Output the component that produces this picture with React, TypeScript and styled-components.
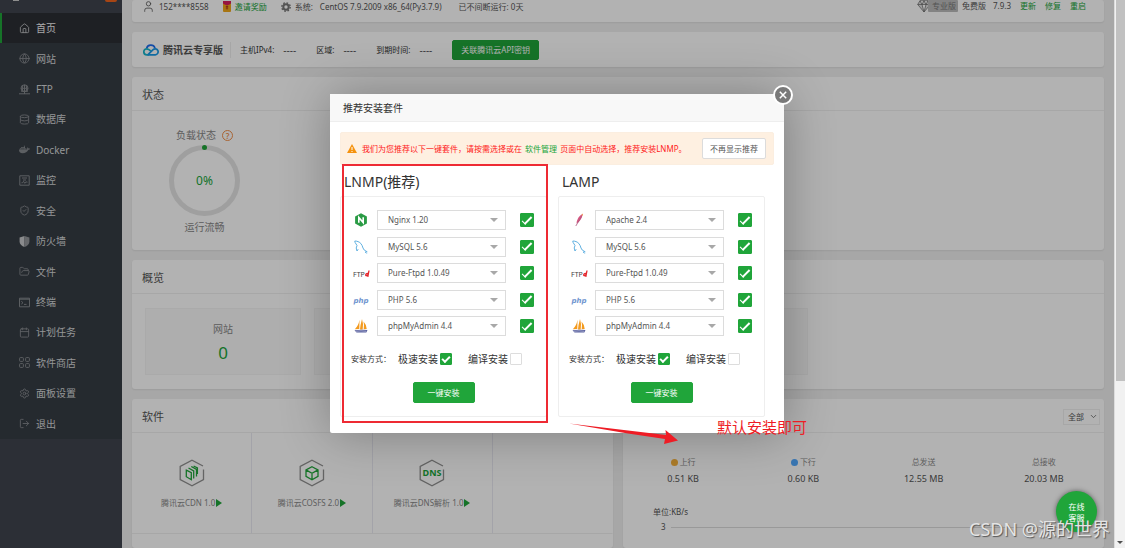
import React from 'react';
import styled, { createGlobalStyle } from 'styled-components';
import {
  House, Globe, Database, ShieldCheck, FolderOpen, Calendar, Settings, LogOut, User, ChevronDown,
} from 'lucide-react';
import { FaDocker } from 'react-icons/fa';

const GlobalStyle = createGlobalStyle`
  *, *::before, *::after { box-sizing: border-box; }
  body {
    margin: 0;
    overflow: hidden;
    background: #f0f0f0;
    color: #555;
    font-family: "Noto Sans", "Noto Sans CJK SC", sans-serif;
    font-size: 8px;
    line-height: 12px;
  }
  button, select, input { font: inherit; color: inherit; margin: 0; }
  a { color: inherit; text-decoration: none; }
  h1, h2, h3, p, ul { margin: 0; padding: 0; font-weight: 400; }
  ul { list-style: none; }
  svg { display: block; flex: none; }
`;

const GREEN = '#20a53a';

const Shell = styled.div`
  position: relative;
  display: grid;
  grid-template-columns: 122px minmax(0, 1fr) 11px;
  height: 100vh;
  overflow: hidden;
`;

/* ---------- sidebar ---------- */

const Sidebar = styled.aside`
  background: #3f444e;
`;

const Brand = styled.div`
  display: flex;
  justify-content: space-between;
  height: 13px;
  padding: 0 5px 0 13px;
`;

const BrandMark = styled.span`
  width: 6px;
  height: 1px;
  background: #ccc;
`;

const BrandBadge = styled.span`
  width: 12px;
  height: 2px;
  border-radius: 0 0 3px 3px;
  background: #f0641e;
`;

const Menu = styled.ul`
  display: grid;
  grid-auto-rows: 1fr;
  height: 426px;
  background: #363d44;
`;

const MenuLink = styled.a<{ $active?: boolean }>`
  display: flex;
  align-items: center;
  gap: 6px;
  height: 100%;
  padding-left: 17px;
  border-left: 2px solid ${(p) => (p.$active ? GREEN : 'transparent')};
  background: ${(p) => (p.$active ? '#2c2f34' : 'transparent')};
  color: ${(p) => (p.$active ? '#f4f4f4' : '#d4d6d8')};
  font-size: 10px;
  svg { color: ${(p) => (p.$active ? '#b8babd' : '#84888d')}; }
`;

/* ---------- content cards ---------- */

const Main = styled.main`
  display: flex;
  flex-direction: column;
  gap: 10px;
  min-width: 0;
  padding: 0 10px;
`;

const Card = styled.section`
  border-radius: 3px;
  background: #fff;
  box-shadow: 0 1px 2px rgba(0, 0, 0, 0.08);
`;

const CardHead = styled.header`
  display: flex;
  align-items: center;
  justify-content: space-between;
  height: 34px;
  padding: 2px 4px 0 10px;
  border-bottom: 1px solid #f0f0f0;
  h2 { font-size: 11px; line-height: 16px; }
`;

const TopBar = styled(Card)`
  display: flex;
  align-items: flex-start;
  justify-content: space-between;
  height: 22px;
  padding: 0 18px 0 10px;
`;

const Inline = styled.div<{ $gap: number }>`
  display: flex;
  align-items: center;
  gap: ${(p) => p.$gap}px;
  white-space: nowrap;
`;

const GreenLink = styled.a`
  color: ${GREEN};
`;

const ProTag = styled.span`
  display: flex;
  align-items: center;
  height: 12px;
  svg { margin-right: -3px; }
  span {
    padding: 0 2px 0 4px;
    border-radius: 1px;
    background: #bcbcbc;
    color: #777;
  }
`;

const CloudBar = styled(Card)`
  display: flex;
  align-items: center;
  height: 35px;
  padding-left: 11px;
  white-space: nowrap;
`;

const CloudName = styled.strong`
  display: flex;
  align-items: center;
  gap: 4px;
  padding-right: 7px;
  border-right: 1px solid #eee;
  font-size: 10px;
  line-height: 16px;
  margin-right: 9px;
`;

const Fact = styled.dl`
  display: flex;
  gap: 9px;
  margin: 0 20px 0 0;
  dt { color: #333; }
  dd { margin: 0; font-size: 10px; }
`;

const GreenButton = styled.button<{ $wide?: boolean }>`
  height: ${(p) => (p.$wide ? 20 : 21)}px;
  padding: 0 ${(p) => (p.$wide ? 8 : 14)}px;
  border: 1px solid ${GREEN};
  border-radius: 2px;
  background: ${GREEN};
  color: #fff;
  line-height: 12px;
`;

const Load = styled.div`
  display: flex;
  flex-direction: column;
  align-items: center;
  width: 145px;
  height: 139px;
  padding-top: 17px;
  color: #888;
  font-size: 10px;
  line-height: 14px;
`;

const Gauge = styled.div`
  position: relative;
  display: grid;
  place-items: center;
  width: 71px;
  height: 71px;
  margin: 3px 0 4px;
  border: 5px solid #e4e4e4;
  border-radius: 50%;
  color: ${GREEN};
  font-size: 12px;
  &::before {
    content: '';
    position: absolute;
    top: -5px;
    left: 28px;
    width: 5px;
    height: 5px;
    border-radius: 50%;
    background: ${GREEN};
  }
`;

const HelpMark = styled.span`
  display: grid;
  place-items: center;
  width: 11px;
  height: 11px;
  border: 1px solid #f2904a;
  border-radius: 50%;
  color: #f2904a;
  font-size: 8px;
  font-weight: 600;
  line-height: 9px;
`;

const Overview = styled.div`
  display: flex;
  gap: 13px;
  padding: 14px 13px;
`;

const Tile = styled.div`
  flex: 0 0 156px;
  height: 67px;
  padding-top: 12px;
  border: 1px solid #f4f4f4;
  background: #fafafa;
  text-align: center;
  color: #888;
  font-size: 10px;
  line-height: 16px;
  p { margin-top: 5px; color: ${GREEN}; font-size: 17px; line-height: 22px; }
`;

const Bottom = styled.div`
  display: grid;
  grid-template-columns: 1fr 1fr;
  flex: 1;
  gap: 10px;
  min-height: 0;
`;

const SoftGrid = styled.div`
  display: grid;
  grid-template-columns: repeat(4, 1fr);
`;

const Soft = styled.div`
  display: flex;
  flex-direction: column;
  align-items: center;
  gap: 10px;
  height: 101px;
  padding-top: 26px;
  border-right: 1px solid #eaeaf2;
  border-bottom: 1px solid #f0f0f0;
  color: #888;
  &:last-child { border-right-color: transparent; }
`;

const Play = styled.span`
  border-left: 6px solid ${GREEN};
  border-top: 4px solid transparent;
  border-bottom: 4px solid transparent;
`;

const Tab = styled.span`
  align-self: flex-end;
  width: 21px;
  height: 2px;
  margin: 0 0 -1px 14px;
  background: ${GREEN};
`;

const AllSelect = styled.label`
  position: relative;
  display: flex;
  align-items: center;
  select {
    width: 37px;
    height: 16px;
    padding: 0 4px;
    border: 1px solid #f0f0f0;
    appearance: none;
    background: #fff;
    line-height: 12px;
  }
  svg { position: absolute; right: 2px; pointer-events: none; }
`;

const Stats = styled.dl`
  display: grid;
  grid-template-columns: repeat(4, 1fr);
  margin: 0;
  padding: 23px 0 20px;
  text-align: center;
  dt {
    display: flex;
    align-items: center;
    justify-content: center;
    gap: 2px;
    color: #888;
  }
  dd { margin: 4px 0 0; font-size: 9px; line-height: 14px; }
`;

const Dot = styled.i<{ $color: string }>`
  width: 7px;
  height: 7px;
  border-radius: 50%;
  background: ${(p) => p.$color};
`;

const Chart = styled.div`
  padding: 0 13px 0 30px;
`;

const Tick = styled.div`
  display: flex;
  align-items: center;
  gap: 5px;
  margin-top: 3px;
  padding-left: 8px;
  &::after { content: ''; flex: 1; height: 1px; background: #dcdcdc; }
`;

/* ---------- scrollbar ---------- */

const Scrollbar = styled.div`
  position: relative;
  z-index: 2;
  display: flex;
  flex-direction: column;
  align-items: center;
  justify-content: space-between;
  padding-bottom: 4px;
  background: #f1f1f1;
  border-left: 1px solid #dcdcdc;
`;

const Thumb = styled.span`
  width: 9px;
  height: 70%;
  background: #c1c1c1;
`;

const ScrollArrow = styled.span`
  border-top: 3px solid #505050;
  border-left: 3px solid transparent;
  border-right: 3px solid transparent;
`;

/* ---------- dialog ---------- */

const Overlay = styled.div`
  position: absolute;
  inset: 0 11px 0 0;
  display: flex;
  justify-content: center;
  align-items: flex-start;
  padding-top: 94px;
  background: rgba(0, 0, 0, 0.3);
`;

const Dialog = styled.div`
  position: relative;
  width: 454px;
  border-radius: 2px;
  background: #fff;
  box-shadow: 1px 1px 50px rgba(0, 0, 0, 0.3);
`;

const DialogTitle = styled.h2`
  height: 28px;
  padding-left: 13px;
  border-bottom: 1px solid #eee;
  background: #f8f8f8;
  color: #333;
  font-size: 10px;
  line-height: 28px;
`;

const Close = styled.button`
  position: absolute;
  top: -9px;
  right: -9px;
  display: grid;
  place-items: center;
  width: 20px;
  height: 20px;
  padding: 0;
  border: 2px solid #fff;
  border-radius: 50%;
  background: #797979;
`;

const DialogBody = styled.div`
  padding: 10px 10px 16px;
`;

const Notice = styled.div`
  display: flex;
  align-items: center;
  height: 33px;
  padding: 0 7px 0 6px;
  border: 1px solid #fbeee0;
  border-radius: 2px;
  background: #fef0e1;
  color: #ff1a1a;
  white-space: nowrap;
  p { flex: 1; margin-left: 5px; }
  a { margin: 0 1px; }
`;

const PlainButton = styled.button`
  height: 21px;
  padding: 0 7px;
  border: 1px solid #dcdcdc;
  border-radius: 2px;
  background: #fff;
  color: #555;
  line-height: 12px;
`;

const Suites = styled.div`
  display: grid;
  grid-template-columns: 207px 207px;
  gap: 11px;
  padding-top: 7px;
`;

const SuiteTitle = styled.h3`
  padding-left: 4px;
  color: #333;
  font-size: 14px;
  line-height: 20px;
`;

const Panel = styled.form`
  display: flex;
  flex-direction: column;
  align-items: center;
  height: 221px;
  margin-top: 4px;
  padding-top: 13px;
  border: 1px solid #eee;
  border-radius: 2px;
`;

const Packages = styled.div`
  display: grid;
  align-content: space-between;
  align-self: stretch;
  height: 126px;
  padding-left: 11px;
`;

const PackageRow = styled.div`
  display: flex;
  align-items: center;
  height: 20px;
`;

const PackageIcon = styled.span`
  display: grid;
  place-items: center;
  width: 18px;
  margin-right: 7px;
`;

const Picker = styled.div`
  position: relative;
  width: 129px;
  margin-right: 14px;
  select {
    display: block;
    width: 100%;
    height: 20px;
    padding: 0 10px;
    border: 1px solid #dcdcdc;
    border-radius: 0;
    appearance: none;
    background: #fff;
    color: #555;
    line-height: 14px;
  }
  &::after {
    content: '';
    position: absolute;
    top: 8px;
    right: 8px;
    border-top: 4px solid #a8a8a8;
    border-left: 4px solid transparent;
    border-right: 4px solid transparent;
    pointer-events: none;
  }
`;

const Check = styled.input.attrs({ type: 'checkbox' })<{ $small?: boolean }>`
  display: grid;
  place-items: center;
  width: ${(p) => (p.$small ? 12 : 14)}px;
  height: ${(p) => (p.$small ? 12 : 14)}px;
  border: 1px solid #ddd;
  border-radius: 1px;
  appearance: none;
  background: #fff;
  &:checked { border-color: ${GREEN}; background: ${GREEN}; }
  &:checked::before {
    content: '';
    width: ${(p) => (p.$small ? 8 : 10)}px;
    height: 5px;
    margin-top: -2px;
    border-left: ${(p) => (p.$small ? 2 : 1)}px solid #fff;
    border-bottom: 2px solid #fff;
    transform: rotate(-45deg);
  }
`;

const Methods = styled.div`
  display: flex;
  align-items: center;
  align-self: stretch;
  margin: 16px 0;
  padding-left: 10px;
  color: #333;
  label {
    display: flex;
    align-items: center;
    gap: 2px;
    font-size: 10px;
    line-height: 14px;
  }
  span { width: 47px; }
  label + label { margin-left: 16px; }
`;

/* ---------- marks over the page ---------- */

const Highlight = styled.div`
  position: absolute;
  top: 70px;
  left: 12px;
  width: 206px;
  height: 259px;
  border: 2px solid #ee2a33;
`;

const Arrow = styled.svg`
  position: absolute;
  top: 328px;
  left: 238px;
`;

const Note = styled.p`
  position: absolute;
  top: 322px;
  left: 387px;
  color: #ee1c25;
  font-size: 15px;
  line-height: 22px;
  white-space: nowrap;
`;

const Service = styled.button`
  position: absolute;
  right: 28px;
  bottom: 16px;
  width: 41px;
  height: 41px;
  padding: 0 10px;
  border: 0;
  border-radius: 50%;
  background: ${GREEN};
  box-shadow: 0 0 5px rgba(0, 0, 0, 0.5);
  color: #fff;
  line-height: 11px;
`;

const Watermark = styled.span`
  position: absolute;
  right: 15px;
  bottom: 7px;
  color: #e4e4e4;
  font-size: 18px;
  line-height: 24px;
  text-shadow: 1px 1px 1px #555;
  white-space: nowrap;
`;

/* ---------- drawings ---------- */

const line = { fill: 'none', stroke: 'currentColor', strokeWidth: 1 } as const;

const FtpIcon = () => (
  <svg width="11" height="11" viewBox="0 0 11 11" {...line}>
    <circle cx="5.5" cy="4.3" r="3.5" />
    <path d="M2 4.3h7M5.5.8v7M3.8 1.5q-1 3 0 5.6M7.2 1.5q1 3 0 5.6M2 7.2h7M0 9.8h11M5.5 8v2" />
  </svg>
);
const MonitorIcon = () => (
  <svg width="11" height="11" viewBox="0 0 11 11" {...line}>
    <path d="M.8.8h9.4v9.4H.8zM2.5 7.8h1l1-1.5 1.3 2 1-1.4 1.7.3M3 3h5M4 5h3" />
  </svg>
);
const WallIcon = () => (
  <svg width="11" height="11" viewBox="0 0 11 11">
    <path d="M5.5 0 .6 1.5v4.2C.6 8.3 3 10 5.5 11z" fill="#c6c8ca" />
    <path d="M5.5 0l4.9 1.5v4.2C10.4 8.3 8 10 5.5 11z" fill="#92959a" />
  </svg>
);
const TerminalIcon = () => (
  <svg width="11" height="11" viewBox="0 0 11 11" {...line}>
    <path d="M.5 1.2h10v8.6H.5zM.5 2.2h10M2.3 4.3l1.7 1.4-1.7 1.4M5 7.4h2.5" />
  </svg>
);
const GridIcon = () => (
  <svg width="11" height="11" viewBox="0 0 11 11" {...line}>
    <rect x=".6" y=".6" width="3.8" height="3.8" rx=".8" />
    <rect x="6.6" y=".6" width="3.8" height="3.8" rx=".8" />
    <rect x=".6" y="6.6" width="3.8" height="3.8" rx=".8" />
    <rect x="6.6" y="6.6" width="3.8" height="3.8" rx=".8" />
  </svg>
);
const GiftIcon = () => (
  <svg width="8" height="12" viewBox="0 0 8 12">
    <rect width="8" height="11" rx="1" fill="#f0a81c" />
    <path d="M0 0h8v2.5Q4 6 0 2.5z" fill="#d81e5c" />
    <path d="M4 4.5v4M2.8 5.5h2.4M2.8 7h2.4" stroke="#b8401c" strokeWidth="1" />
  </svg>
);
const GearIcon = () => (
  <svg width="10" height="10" viewBox="0 0 10 10">
    <circle cx="5" cy="5" r="2.7" fill="none" stroke="#777" strokeWidth="2" />
    <circle cx="5" cy="5" r="4.2" fill="none" stroke="#777" strokeWidth="1.4" strokeDasharray="1.65 1.65" />
  </svg>
);
const DiamondIcon = () => (
  <svg width="14" height="13" viewBox="0 0 14 13" fill="#ddd" stroke="#666" strokeWidth=".7">
    <path d="M3 .7h8l2.3 3.8L7 12 .7 4.500zM.7 4.500h12.600M3 .7l2 3.800L7 12l2-7.500 2-3.800M5 4.500 7 .7l2 3.800" />
  </svg>
);
const CloudIcon = () => (
  <svg width="16" height="13" viewBox="0 0 16 13" fill="none" strokeWidth="1.7">
    <path d="M3.600 5.500A4.400 4.400 0 0 1 12 5" stroke="#1c6df0" />
    <path d="M8 8.200C6 6.200 5 5.800 3.800 5.800a3 3 0 1 0 0 6h2" stroke="#17b5c9" />
    <path d="M4.500 11.800h7.800a3 3 0 1 0-2.200-5.200L5 11.600" stroke="#189ae8" />
  </svg>
);
const Hex = ({ children }: { children: React.ReactNode }) => (
  <svg width="26" height="28" viewBox="0 0 26 28" fill="none" stroke={GREEN} strokeWidth="1.3">
    <path d="M24.500 10.500v10L13 26.800 1.200 20.500V7.500L13 1.200l11 5.800" stroke="#909090" />
    {children}
  </svg>
);
const CdnIcon = () => (
  <Hex>
    <path d="M7.3 11.2l5 2.5v7l-5-3zM9.5 9l5.2 3v7.500M12.3 7.500l5.200 3v7M14.600 7l3.800 2v6" />
  </Hex>
);
const CubeIcon = () => (
  <Hex>
    <path d="M13 7.700l6 3.200v6.500l-6 3.300-6-3.300v-6.500zM7 10.900l6 3.300 6-3.300M13 14.200v6.500" />
  </Hex>
);
const DnsIcon = () => (
  <Hex>
    <text x="13" y="17" textAnchor="middle" fill={GREEN} stroke="none" fontSize="9" fontWeight="700">DNS</text>
  </Hex>
);

const NginxIcon = () => (
  <svg width="14" height="14" viewBox="0 0 14 14">
    <path d="M7 .3l5.900 3.300v6.800L7 13.700 1.100 10.400V3.600z" fill="#2a9b45" />
    <path d="M4.800 9.800V4.400l4.400 5.200V4.200" fill="none" stroke="#fff" strokeWidth="1.6" />
  </svg>
);
const ApacheIcon = () => (
  <svg width="14" height="14" viewBox="0 0 14 14">
    <path d="M10.800.8C7.800 2.200 4.800 5.800 4.500 10.500c2.500-1 5.600-4.700 6.300-9.700z" fill="#d4557f" />
    <path d="M9.500 3.500 3.800 13" stroke="#a8597f" strokeWidth=".8" />
    <path d="M11 .5 9.300 1.900l1.300.8z" fill="#f0a04a" />
  </svg>
);
const MysqlIcon = () => (
  <svg width="14" height="14" viewBox="0 0 14 14" fill="none" stroke="#62b1e0" strokeWidth="1">
    <path d="M3 11 2.200 8 3 5.500 1 2.300.8 1l2 .2C6.500 2 8 4.500 9 8l1.200 2 3 1.800-2 .2 1.500 1.500" />
    <path d="M3 11l1.200-1.800" />
  </svg>
);
const PhpAdminIcon = () => (
  <svg width="14" height="14" viewBox="0 0 14 14">
    <path d="M5.500.8Q4.500 7 .8 10.200L5.300 10zM8 0Q6.300 6 6 10.500h2.700Q9.700 5 8 0zM9.500 2.500q1 4 .2 7.800l3-.2q-.2-4.500-3.200-7.600z" fill="#f39a1e" />
    <path d="M.5 11.200q6-1 13-.2l-1.200 2.500H2.500z" fill="#5b62a0" />
    <path d="M2 12.300q5-1 10 0" stroke="#c8cbe0" strokeWidth=".6" fill="none" />
  </svg>
);
const FtpdIcon = () => (
  <svg width="18" height="12" viewBox="0 0 18 12">
    <text x="1" y="10" fontSize="7" fill="#444">FTP</text>
    <path d="M17 3.500l-1.200 6.300M16 6.500q-2.200-.4-2.300 1.600.3 1.500 2.200-.6" fill="none" stroke="#e4262c" strokeWidth="1.300" />
  </svg>
);
const PhpIcon = () => (
  <svg width="18" height="12" viewBox="0 0 18 12">
    <text x="9" y="9" textAnchor="middle" fontSize="7" fontWeight="700" fontStyle="italic" fontFamily="DejaVu Sans" fill="#7196d0">php</text>
  </svg>
);
const WarnIcon = () => (
  <svg width="10" height="9" viewBox="0 0 10 9">
    <path d="M5 0l5 9H0z" fill="#f5920e" />
    <path d="M5 3v3M5 7v1" stroke="#fff" strokeWidth="1" />
  </svg>
);

/* ---------- data ---------- */

const MENU = [
  { name: '首页', icon: <House size={11} /> },
  { name: '网站', icon: <Globe size={11} /> },
  { name: 'FTP', icon: <FtpIcon /> },
  { name: '数据库', icon: <Database size={11} /> },
  { name: 'Docker', icon: <FaDocker size={11} /> },
  { name: '监控', icon: <MonitorIcon /> },
  { name: '安全', icon: <ShieldCheck size={11} /> },
  { name: '防火墙', icon: <WallIcon /> },
  { name: '文件', icon: <FolderOpen size={11} /> },
  { name: '终端', icon: <TerminalIcon /> },
  { name: '计划任务', icon: <Calendar size={11} /> },
  { name: '软件商店', icon: <GridIcon /> },
  { name: '面板设置', icon: <Settings size={11} /> },
  { name: '退出', icon: <LogOut size={11} /> },
];

const FACTS = ['主机IPv4:', '区域:', '到期时间:'];

const SOFTWARE = [
  { name: '腾讯云CDN 1.0', icon: <CdnIcon /> },
  { name: '腾讯云COSFS 2.0', icon: <CubeIcon /> },
  { name: '腾讯云DNS解析 1.0', icon: <DnsIcon /> },
];

const TRAFFIC = [
  { name: '上行', value: '0.51 KB', color: '#f7b23c' },
  { name: '下行', value: '0.60 KB', color: '#52a9ff' },
  { name: '总发送', value: '12.55 MB' },
  { name: '总接收', value: '20.03 MB' },
];

const SHARED = [
  { name: 'MySQL 5.6', icon: <MysqlIcon /> },
  { name: 'Pure-Ftpd 1.0.49', icon: <FtpdIcon /> },
  { name: 'PHP 5.6', icon: <PhpIcon /> },
  { name: 'phpMyAdmin 4.4', icon: <PhpAdminIcon /> },
];

const SUITES = [
  { title: 'LNMP(推荐)', items: [{ name: 'Nginx 1.20', icon: <NginxIcon /> }, ...SHARED] },
  { title: 'LAMP', items: [{ name: 'Apache 2.4', icon: <ApacheIcon /> }, ...SHARED] },
];

const Suite = ({ title, items }: (typeof SUITES)[number]) => (
  <section>
    <SuiteTitle>{title}</SuiteTitle>
    <Panel>
      <Packages>
        {items.map((item) => (
          <PackageRow key={item.name}>
            <PackageIcon>{item.icon}</PackageIcon>
            <Picker>
              <select aria-label={item.name}>
                <option>{item.name}</option>
              </select>
            </Picker>
            <Check aria-label={item.name} defaultChecked />
          </PackageRow>
        ))}
      </Packages>
      <Methods>
        <span>安装方式：</span>
        <label>极速安装<Check $small defaultChecked /></label>
        <label>编译安装<Check $small /></label>
      </Methods>
      <GreenButton type="button">一键安装</GreenButton>
    </Panel>
  </section>
);

export default function App() {
  return (
    <>
      <GlobalStyle />
      <Shell>
        <Sidebar>
          <Brand>
            <BrandMark />
            <BrandBadge />
          </Brand>
          <nav>
            <Menu>
              {MENU.map((m, i) => (
                <li key={m.name}>
                  <MenuLink href="#" $active={i === 0}>{m.icon}{m.name}</MenuLink>
                </li>
              ))}
            </Menu>
          </nav>
        </Sidebar>

        <Main>
          <TopBar>
            <Inline $gap={17}>
              <Inline $gap={14}>
                <Inline $gap={4}><User size={13} strokeWidth={1.5} />152****8558</Inline>
                <Inline $gap={4}><GiftIcon /><GreenLink href="#">邀请奖励</GreenLink></Inline>
                <Inline $gap={4}>
                  <GearIcon />
                  <Inline $gap={7}><span>系统:</span><span>CentOS 7.9.2009 x86_64(Py3.7.9)</span></Inline>
                </Inline>
              </Inline>
              <span>已不间断运行: 0天</span>
            </Inline>
            <Inline $gap={9}>
              <Inline $gap={7}>
                <Inline $gap={4}>
                  <ProTag><DiamondIcon /><span>专业版</span></ProTag>
                  免费版
                </Inline>
                <span>7.9.3</span>
              </Inline>
              <GreenLink href="#">更新</GreenLink>
              <GreenLink href="#">修复</GreenLink>
              <GreenLink href="#">重启</GreenLink>
            </Inline>
          </TopBar>

          <CloudBar>
            <CloudName><CloudIcon />腾讯云专享版</CloudName>
            {FACTS.map((f) => (
              <Fact key={f}><dt>{f}</dt><dd>----</dd></Fact>
            ))}
            <GreenButton $wide>关联腾讯云API密钥</GreenButton>
          </CloudBar>

          <Card>
            <CardHead><h2>状态</h2></CardHead>
            <Load>
              <Inline $gap={6}>负载状态<HelpMark>?</HelpMark></Inline>
              <Gauge>0%</Gauge>
              运行流畅
            </Load>
          </Card>

          <Card>
            <CardHead><h2>概览</h2></CardHead>
            <Overview>
              <Tile>网站<p>0</p></Tile>
              <Tile />
              <Tile />
              <Tile />
            </Overview>
          </Card>

          <Bottom>
            <Card>
              <CardHead><h2>软件</h2></CardHead>
              <SoftGrid>
                {SOFTWARE.map((s) => (
                  <Soft key={s.name}>
                    {s.icon}
                    <Inline $gap={1}>{s.name}<Play /></Inline>
                  </Soft>
                ))}
                <Soft />
              </SoftGrid>
            </Card>
            <Card>
              <CardHead>
                <Tab />
                <AllSelect>
                  <select aria-label="全部"><option>全部</option></select>
                  <ChevronDown size={9} />
                </AllSelect>
              </CardHead>
              <Stats>
                {TRAFFIC.map((t) => (
                  <div key={t.name}>
                    <dt>{t.color && <Dot $color={t.color} />}{t.name}</dt>
                    <dd>{t.value}</dd>
                  </div>
                ))}
              </Stats>
              <Chart>
                单位:KB/s
                <Tick>3</Tick>
              </Chart>
            </Card>
          </Bottom>
        </Main>

        <Scrollbar>
          <Thumb />
          <ScrollArrow />
        </Scrollbar>

        <Overlay>
          <Dialog role="dialog" aria-label="推荐安装套件">
            <DialogTitle>推荐安装套件</DialogTitle>
            <Close aria-label="关闭">
              <svg width="8" height="8" viewBox="0 0 8 8" stroke="#fff" strokeWidth="1.5">
                <path d="M.8.8l6.400 6.400M7.200.8.8 7.200" />
              </svg>
            </Close>
            <DialogBody>
              <Notice>
                <WarnIcon />
                <p>
                  我们为您推荐以下一键套件，请按需选择或在 <GreenLink href="#">软件管理</GreenLink> 页面中自动选择，推荐安装LNMP。
                </p>
                <PlainButton>不再显示推荐</PlainButton>
              </Notice>
              <Suites>
                {SUITES.map((s) => <Suite key={s.title} {...s} />)}
              </Suites>
            </DialogBody>
            <Highlight />
            <Arrow width="112" height="24" viewBox="0 0 112 24">
              <path d="M1 1.500 98 13l-.5-5L110 18.500 96 22l1-5L60 11.500z" fill="#ee1c25" />
            </Arrow>
            <Note>默认安装即可</Note>
          </Dialog>
        </Overlay>

        <Service>在线客服</Service>
        <Watermark>CSDN @源的世界</Watermark>
      </Shell>
    </>
  );
}
